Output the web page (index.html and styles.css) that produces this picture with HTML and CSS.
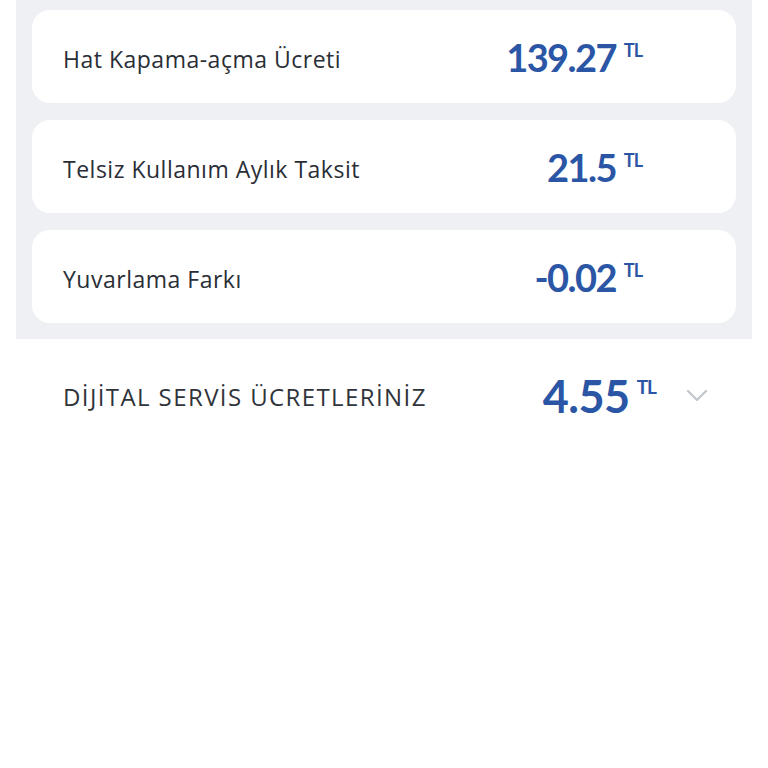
FILE: index.html
```html
<!DOCTYPE html>
<html lang="tr">
<head>
  <meta charset="UTF-8" />
  <title>Fatura Detayı</title>
  <link rel="stylesheet" href="styles.css">
</head>
<body>
  <div class="panel">
    <div class="card">
      <span class="label">Hat Kapama-açma Ücreti</span>
      <span class="amount">139.27<sup>TL</sup></span>
    </div>
    <div class="card">
      <span class="label">Telsiz Kullanım Aylık Taksit</span>
      <span class="amount">21.5<sup>TL</sup></span>
    </div>
    <div class="card">
      <span class="label">Yuvarlama Farkı</span>
      <span class="amount">-0.02<sup>TL</sup></span>
    </div>
  </div>

  <div class="section">
    <span class="section-title">DİJİTAL SERVİS ÜCRETLERİNİZ</span>
    <span class="total">4.55<sup>TL</sup></span>
    <svg class="chevron" width="22" height="14" viewBox="0 0 22 14">
      <path d="M2 2 L11 11 L20 2" fill="none" stroke="#c3c7ce" stroke-width="2.4" stroke-linecap="round" stroke-linejoin="round"/>
    </svg>
  </div>
</body>
</html>
```

FILE: styles.css
```css
body { margin: 0; background: #fff; font-family: Lato, "Open Sans", sans-serif; color: #2a2e36; }

.panel {
  margin: 0 16px;
  background: #eef0f3;
  padding: 10px 16px 16px;
  display: flex;
  flex-direction: column;
  gap: 17px;
}

.card {
  height: 93px;
  background: #fff;
  border-radius: 18px;
  display: flex;
  align-items: center;
  padding-left: 31px;
}

.label {
  font-family: "Open Sans", sans-serif;
  font-size: 23px;
  font-weight: 500;
  letter-spacing: 0.5px;
  padding-top: 4px;
}

.amount {
  margin-left: auto;
  margin-right: 94px;
  font-size: 38px;
  font-weight: 700;
  color: #2b55a5;
  display: flex;
  align-items: flex-start;
  letter-spacing: -1.6px;
}

sup {
  font-size: 18px;
  line-height: 1;
  margin-left: 8px;
  margin-top: 7px;
  letter-spacing: -1px;
}

.section {
  height: 114px;
  display: flex;
  align-items: center;
  padding: 0 60px 0 63px;
}

.section-title {
  font-family: "Open Sans", sans-serif;
  font-size: 24px;
  letter-spacing: 1.4px;
  color: #2f333a;
}

.total {
  margin-left: auto;
  font-size: 45px;
  font-weight: 700;
  color: #2b55a5;
  display: flex;
  align-items: flex-start;
  letter-spacing: -0.5px;
}

.total sup { margin-left: 7px; margin-top: 8px; font-size: 19px; }

.chevron { margin-left: 30px; }
```
